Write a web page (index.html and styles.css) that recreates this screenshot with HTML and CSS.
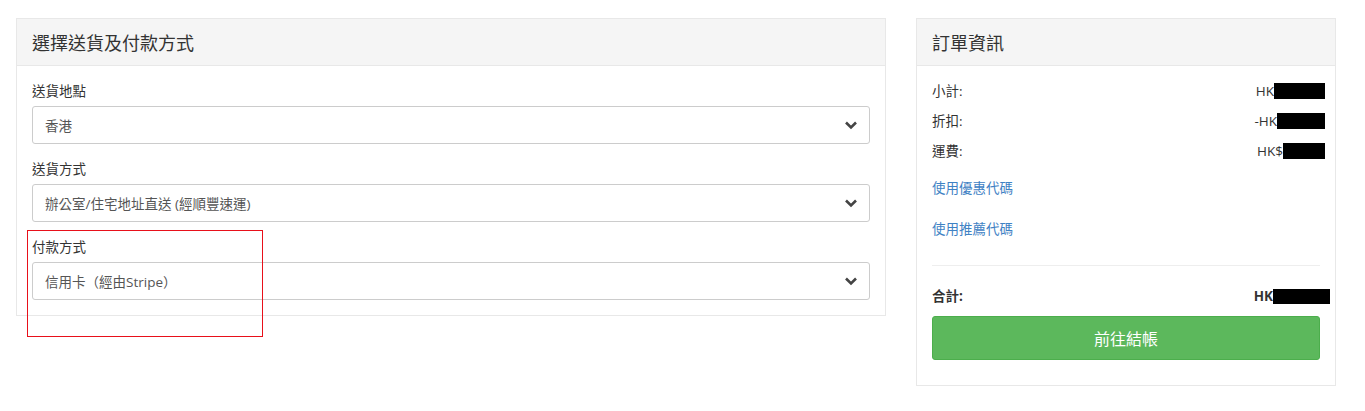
FILE: index.html
```html
<!DOCTYPE html>
<html lang="zh-Hant">
<head>
<meta charset="utf-8">
<title>Checkout</title>
<link rel="stylesheet" href="styles.css">
</head>
<body>
<div class="page">
  <section class="panel panel-main">
    <div class="panel-heading">選擇送貨及付款方式</div>
    <div class="panel-body">
      <div class="form-group">
        <div class="label">送貨地點</div>
        <div class="select"><span>香港</span><svg class="chev" width="14" height="10" viewBox="0 0 14 10"><path d="M2 2.5 L7 7.5 L12 2.5" fill="none" stroke="#444" stroke-width="2.6"/></svg></div>
      </div>
      <div class="form-group">
        <div class="label">送貨方式</div>
        <div class="select"><span>辦公室/住宅地址直送 (經順豐速運)</span><svg class="chev" width="14" height="10" viewBox="0 0 14 10"><path d="M2 2.5 L7 7.5 L12 2.5" fill="none" stroke="#444" stroke-width="2.6"/></svg></div>
      </div>
      <div class="form-group last">
        <div class="label">付款方式</div>
        <div class="select"><span>信用卡（經由Stripe）</span><svg class="chev" width="14" height="10" viewBox="0 0 14 10"><path d="M2 2.5 L7 7.5 L12 2.5" fill="none" stroke="#444" stroke-width="2.6"/></svg></div>
      </div>
    </div>
  </section>
  <section class="panel panel-side">
    <div class="panel-heading">訂單資訊</div>
    <div class="panel-body">
      <div class="row"><span>小計:</span><span class="val">HK<i class="redact w52"></i></span></div>
      <div class="row"><span>折扣:</span><span class="val">-HK<i class="redact w48"></i></span></div>
      <div class="row"><span>運費:</span><span class="val">HK$<i class="redact w42"></i></span></div>
      <a class="link first">使用優惠代碼</a>
      <a class="link">使用推薦代碼</a>
      <hr class="divider">
      <div class="row total"><span>合計:</span><span class="val">HK<i class="redact w57 tot"></i></span></div>
      <button class="btn">前往結帳</button>
    </div>
  </section>
</div>
<div class="annot"></div>
</body>
</html>
```
FILE: styles.css
```css
html, body {
  margin: 0;
  padding: 0;
  background: #fff;
}
body {
  font-family: "Open Sans", "Noto Sans CJK TC", sans-serif;
  font-size: 14px;
  color: #333;
  position: relative;
  width: 1365px;
  height: 411px;
  overflow: hidden;
}
.page {
  display: flex;
  align-items: flex-start;
  gap: 30px;
  padding: 18px 0 0 16px;
}
.panel {
  border: 1px solid #e8e8e8;
  background: #fff;
  box-sizing: border-box;
}
.panel-main { width: 870px; }
.panel-side { width: 420px; }
.panel-heading {
  background: #f5f5f5;
  border-bottom: 1px solid #e8e8e8;
  height: 47px;
  box-sizing: border-box;
  padding: 0 15px;
  display: flex;
  align-items: center;
  font-size: 18px;
  color: #333;
}
.panel-body {
  padding: 15px;
}
.form-group { margin-bottom: 15px; }
.form-group.last { margin-bottom: 0; }
.label {
  line-height: 20px;
  height: 20px;
  font-size: 13.5px;
  margin-bottom: 5px;
  color: #333;
}
.select {
  height: 38px;
  box-sizing: border-box;
  border: 1px solid #ccc;
  border-radius: 3px;
  display: flex;
  align-items: center;
  justify-content: space-between;
  padding: 0 11px 0 12px;
  font-size: 13.5px;
  color: #555;
}
.chev { display: block; }
.row {
  display: flex;
  justify-content: space-between;
  line-height: 20px;
  height: 20px;
  margin-bottom: 10px;
  font-size: 13.5px;
}
.val {
  display: flex;
  align-items: center;
  margin-right: -5px;
}
.redact {
  display: inline-block;
  height: 16px;
  background: #000;
}
.w52 { width: 51px; }
.w48 { width: 48px; }
.w42 { width: 42px; }
.w57 { width: 57px; height: 15px; }
.link {
  display: block;
  color: #3f82c4;
  line-height: 20px;
  height: 20px;
  font-size: 13.5px;
}
.link.first { margin-top: 17px; margin-bottom: 21px; }
.divider {
  border: 0;
  border-top: 1px solid #eee;
  margin: 26px 0 20px;
}
.total { font-weight: bold; margin-bottom: 10px; }
.total .val { margin-right: -10px; }
.btn {
  display: block;
  width: 100%;
  height: 44px;
  background: #5cb85c;
  border: 1px solid #4cae4c;
  border-radius: 3px;
  color: #fff;
  font-family: inherit;
  font-size: 16px;
  margin-bottom: 10px;
}
.annot {
  position: absolute;
  left: 27px;
  top: 230px;
  width: 234px;
  height: 105px;
  border: 1px solid #e8101a;
}
```
